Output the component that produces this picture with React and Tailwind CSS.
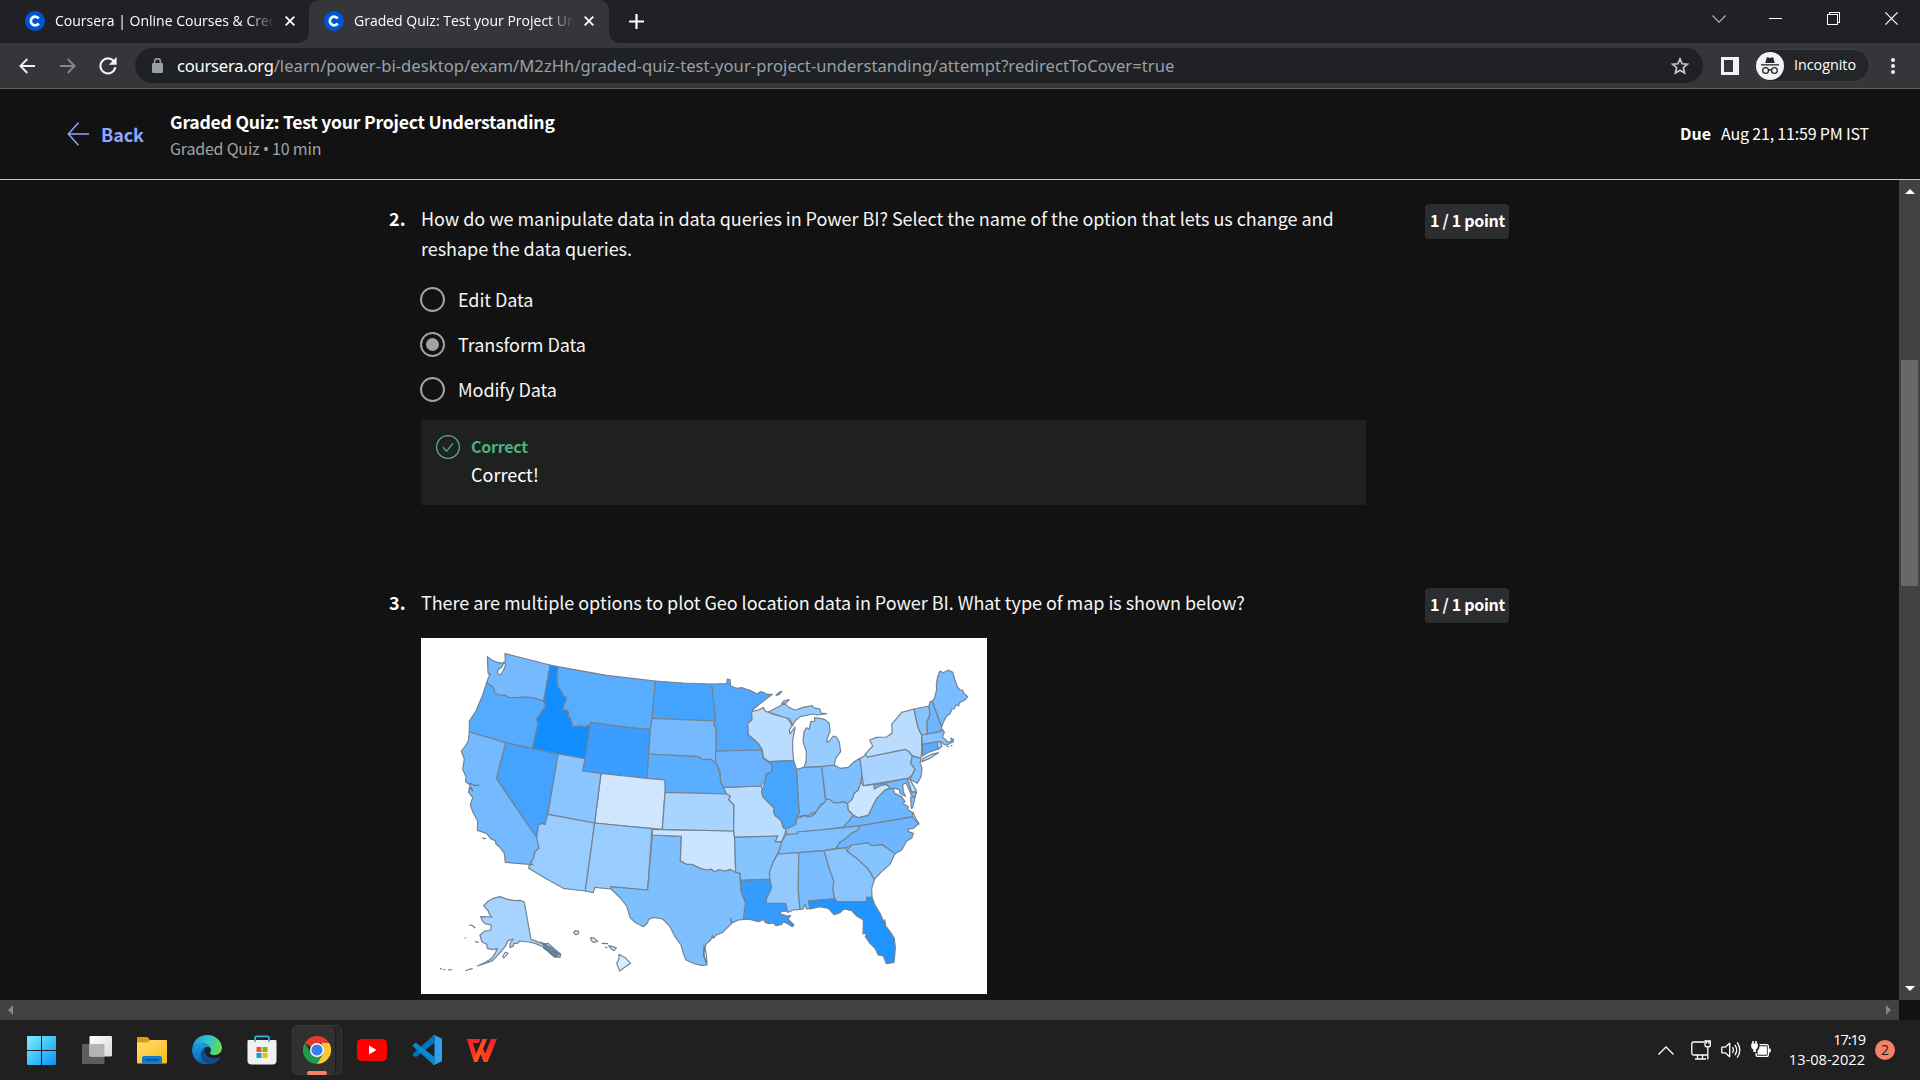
import React from "react";

const STATES = [
  ["#75b9ff", "202,65 215,75 232,82 248,85 256,80 255,56 320,72 390,90 371,198 345,190 320,186 290,188 265,187 255,181 235,180 224,175 222,163 218,155 200,143 205,128 210,119 204,112 203,90"],
  ["#55abff", "200,143 218,155 222,163 224,175 235,180 255,181 265,187 290,188 320,186 345,190 371,198 378,212 350,252 354,268 337,341 257,323 148,291 148,258 168,228 188,180"],
  ["#128dff", "390,90 413,95 411,133 414,154 424,168 431,185 440,187 434,206 428,224 444,227 446,243 452,250 458,275 480,272 495,276 504,270 511,276 495,371 414,357 337,341 354,268 350,252 364,232 378,212 371,198"],
  ["#59adff", "413,95 480,107 560,121 706,138 697,250 691,284 600,275 512,262 511,276 504,270 495,276 480,272 458,275 452,250 446,243 444,227 428,224 434,206 440,187 431,185 424,168 414,154 411,133"],
  ["#3a9dff", "512,262 600,275 691,284 681,430 543,415 488,408 495,371"],
  ["#43a3ff", "706,138 790,144 875,147 880,190 884,225 887,258 696,250"],
  ["#75b9ff", "696,250 887,258 881,268 888,280 889,345 886,382 870,373 850,374 835,365 686,357 691,284"],
  ["#5aaeff", "686,357 835,365 850,374 870,373 886,382 895,400 900,420 903,440 910,457 920,477 735,472 735,435 681,430"],
  ["#d0e6ff", "543,415 681,430 735,435 735,472 727,583 620,574 524,564"],
  ["#8ac5ff", "414,357 495,371 488,408 543,415 524,564 383,538"],
  ["#43a3ff", "257,323 337,341 414,357 383,538 375,569 366,565 356,569 350,607 303,540 229,430"],
  ["#75baff", "148,291 257,323 229,430 303,540 350,607 357,640 345,650 340,672 331,682 337,689 256,682 253,655 240,637 228,628 226,617 212,611 200,595 172,586 173,558 158,530 151,510 158,488 146,472 150,450 137,440 138,425 128,403 133,372 124,348 138,330 145,317"],
  ["#9acdff", "383,538 524,564 496,768 430,760 380,732 326,700 328,690 338,689 332,682 340,672 345,650 357,640 350,607 356,569 366,565 375,569"],
  ["#9acdff", "524,564 696,581 683,765 573,756 573,762 524,757 520,773 496,768"],
  ["#7dbfff", "697,600 784,604 781,677 800,688 817,688 830,695 845,701 860,705 873,702 885,710 895,704 915,708 930,703 961,715 961,737 963,768 977,805 973,825 973,853 955,855 938,863 931,850 935,866 920,880 908,892 890,899 880,910 877,900 872,915 858,927 854,945 850,960 861,990 845,991 825,987 798,975 790,955 783,930 765,905 750,875 728,852 700,847 686,853 682,865 670,875 648,864 630,848 626,832 620,813 600,788 573,762 573,755 683,765"],
  ["#cbe4ff", "696,583 941,588 944,610 947,712 930,703 915,708 895,704 885,710 873,702 860,705 845,701 830,695 817,688 800,688 781,677 784,604 697,600"],
  ["#a9d4ff", "735,472 921,477 931,484 926,494 942,510 941,588 727,583"],
  ["#b9dcff", "910,457 1023,453 1027,460 1025,473 1030,487 1055,512 1063,518 1061,530 1066,542 1083,555 1090,578 1099,582 1094,598 1085,620 1065,621 1073,603 944,607 941,588 942,510 926,494 931,484 920,477"],
  ["#6ab4ff", "887,348 1024,345 1030,362 1028,370 1045,380 1057,392 1055,410 1038,417 1037,432 1023,453 910,457 902,440 900,410 887,382"],
  ["#50a8ff", "875,147 920,146 922,132 930,134 932,153 950,160 965,158 978,162 990,166 1000,171 1010,177 1022,170 1030,172 1040,178 1057,178 1030,198 1000,223 994,232 996,255 983,265 984,300 1000,312 1015,325 1024,333 1024,345 888,348 889,280 881,268 887,258 884,225 880,190"],
  ["#b9dcff", "995,230 1015,225 1030,218 1037,230 1045,231 1060,238 1080,243 1100,248 1110,260 1116,272 1108,285 1110,297 1125,276 1122,295 1118,315 1118,345 1121,377 1047,380 1030,367 1027,345 1015,325 1000,312 985,300 983,265 996,255"],
  ["#47a5ff", "1047,380 1121,377 1130,403 1136,505 1138,535 1130,550 1128,568 1108,578 1099,582 1090,578 1083,555 1066,542 1061,530 1063,518 1055,512 1030,487 1025,473 1037,432 1038,417 1055,410 1057,392"],
  ["#79bcff", "1130,403 1152,397 1205,394 1217,500 1200,510 1195,520 1190,530 1175,535 1165,543 1150,541 1140,547 1130,547 1138,535 1136,505"],
  ["#7dbfff", "1205,394 1242,390 1260,400 1285,397 1300,382 1320,370 1327,410 1323,440 1315,465 1303,475 1297,492 1283,507 1273,500 1260,503 1240,503 1230,494 1217,492"],
  ["#97ccff", "1152,397 1205,394 1243,390 1247,370 1262,350 1258,322 1250,307 1240,303 1228,318 1220,322 1222,308 1230,290 1228,265 1215,254 1200,250 1183,248 1185,258 1172,260 1168,283 1160,278 1152,290 1149,320 1159,350 1158,380"],
  ["#97ccff", "1045,231 1080,213 1093,205 1108,218 1125,225 1150,217 1177,212 1180,218 1200,222 1202,234 1220,236 1190,240 1180,237 1165,240 1140,245 1125,258 1118,272 1110,252 1080,243"],
  ["#50a8ff", "1068,181 1076,173 1086,169 1078,178"],
  ["#97ccff", "1085,207 1090,198 1107,194 1098,204"],
  ["#86c4ff", "1130,550 1150,541 1165,543 1175,535 1190,530 1195,520 1217,500 1217,492 1230,494 1240,503 1260,503 1273,500 1283,507 1285,525 1300,542 1285,560 1270,576 1200,585 1133,591 1132,597 1099,598 1097,582 1108,578 1128,568"],
  ["#80c0ff", "1098,598 1132,597 1133,591 1200,585 1270,578 1320,572 1315,585 1295,595 1275,612 1260,622 1248,640 1212,647 1136,653 1074,657 1085,620"],
  ["#86c4ff", "944,607 1073,603 1065,621 1085,620 1078,645 1060,680 1050,712 1051,732 961,737 961,715 947,712"],
  ["#359bff", "961,736 1051,733 1055,758 1040,790 1038,805 1097,805 1103,828 1082,830 1082,837 1102,843 1112,842 1104,852 1122,870 1117,875 1103,866 1090,860 1085,868 1068,872 1060,864 1045,866 1033,860 1033,853 1015,860 990,853 970,853 977,805 963,768"],
  ["#92caff", "1074,657 1136,653 1135,770 1140,823 1120,825 1103,832 1097,805 1038,805 1040,790 1055,758 1050,732 1048,712 1060,680"],
  ["#79bcff", "1136,653 1212,647 1228,700 1242,740 1238,760 1244,792 1165,798 1170,820 1160,822 1155,808 1150,822 1140,823 1135,770"],
  ["#8ac5ff", "1212,647 1280,638 1282,648 1310,670 1340,697 1352,713 1363,735 1355,760 1356,787 1340,787 1340,800 1250,800 1244,790 1238,760 1242,740 1228,700"],
  ["#2094ff", "1165,798 1243,791 1250,800 1340,800 1340,787 1356,787 1365,810 1380,835 1395,870 1410,890 1423,910 1426,940 1422,982 1399,986 1390,963 1375,960 1365,940 1350,925 1336,905 1340,893 1329,897 1330,855 1310,843 1295,827 1272,822 1260,833 1242,839 1225,820 1200,815 1170,822"],
  ["#86c4ff", "1280,647 1295,630 1345,623 1355,632 1388,629 1425,656 1410,688 1385,710 1363,733 1352,713 1340,697 1310,670"],
  ["#6eb6ff", "1248,640 1260,622 1275,612 1295,595 1315,585 1320,572 1478,545 1495,567 1480,580 1462,583 1466,590 1480,595 1475,610 1460,618 1445,645 1425,656 1388,629 1355,632 1345,623 1295,630 1280,638"],
  ["#6eb6ff", "1268,578 1285,560 1300,542 1315,548 1345,542 1355,520 1370,490 1382,478 1395,465 1412,460 1420,462 1424,475 1445,485 1455,500 1448,505 1465,515 1462,523 1478,533 1478,545 1320,572"],
  ["#cbe4ff", "1323,440 1330,452 1363,448 1363,462 1380,450 1395,446 1412,458 1395,465 1382,478 1370,490 1355,520 1345,540 1315,548 1300,540 1285,525 1283,505 1297,492 1303,475 1315,465"],
  ["#a9d4ff", "1320,370 1340,359 1343,366 1455,343 1465,348 1477,363 1472,385 1485,402 1478,418 1465,430 1330,452 1325,410"],
  ["#b9dcff", "1335,358 1358,333 1349,315 1370,307 1400,306 1417,293 1415,268 1430,250 1445,232 1482,222 1488,250 1495,280 1505,300 1505,350 1503,370 1477,362 1465,348 1455,343 1343,366"],
  ["#b9dcff", "1505,380 1510,370 1535,358 1555,353 1530,370"],
  ["#86c4ff", "1477,363 1503,370 1500,383 1506,400 1503,425 1492,445 1483,440 1470,432 1478,418 1485,402 1472,385"],
  ["#75b9ff", "1363,462 1363,450 1400,443 1462,430 1475,471 1490,472 1485,486 1474,482 1468,465 1458,444 1448,448 1450,470 1456,484 1440,475 1438,464 1424,460 1412,460 1400,448 1380,452"],
  ["#b9dcff", "1462,430 1470,433 1478,448 1490,468 1475,471"],
  ["#86c4ff", "1472,486 1485,487 1478,518 1474,520"],
  ["#86c4ff", "1482,222 1527,213 1530,238 1521,262 1522,298 1505,300 1495,280 1488,250"],
  ["#6eb6ff", "1527,213 1530,200 1537,198 1552,240 1565,275 1562,288 1522,298 1521,262 1530,238"],
  ["#79bcff", "1537,198 1543,190 1547,175 1550,165 1549,148 1553,125 1560,108 1570,113 1585,105 1598,112 1605,135 1612,156 1620,165 1628,165 1630,173 1643,185 1635,195 1618,203 1616,213 1608,210 1602,222 1596,222 1590,236 1580,243 1570,262 1565,275 1552,240"],
  ["#86c4ff", "1505,300 1562,290 1567,283 1573,292 1567,305 1583,321 1596,318 1592,309 1600,313 1600,320 1580,330 1572,328 1562,320 1507,328"],
  ["#59adff", "1507,328 1552,320 1556,341 1525,352 1508,363"],
  ["#a9d4ff", "1551,321 1561,320 1566,334 1555,343"],
  ["#a6d3ff", "182,845 216,846 208,838 205,828 191,812 205,798 220,790 240,785 262,793 285,797 300,796 313,801 323,858 333,914 345,917 370,928 385,925 403,942 422,957 420,967 402,964 385,950 370,936 345,925 325,921 300,918 292,925 282,925 280,933 270,938 270,925 280,912 264,917 255,935 244,948 232,962 218,977 195,985 172,993 195,983 215,970 225,956 232,940 218,944 202,940 200,928 185,920 180,900 195,888 212,885 214,870 195,866 188,859"],
  ["#dcecff", "597,958 615,968 632,985 615,996 599,1008 590,985 597,972"],
  ["#dcecff", "461,893 466,887 476,889 475,897 467,899"],
  ["#dcecff", "512,908 522,909 533,919 520,922 514,917"],
  ["#dcecff", "566,932 576,935 589,938 582,947 572,940"],
];

const COAST_LINES = [
  "148,445 158,448 165,452 178,450",
  "146,462 155,460 158,468 152,455",
  "187,608 191,611 198,610",
  "545,925 564,926", "555,935 562,939",
  "148,870 158,872 166,879",
  "60,1000 66,1003", "70,1005 76,1003", "84,1005 95,1004",
  "134,908 138,910", "165,920 176,922",
  "136,1007 148,1003 158,1001",
  "247,967 256,952 264,955 255,966 249,969",
  "362,920 378,932 395,940 402,950 420,958",
  "370,940 385,948 398,962 408,968",
  "375,925 370,935 385,945 395,955 412,963",
  "852,930 851,950 854,970 861,985 858,952 853,935",
  "1394,853 1397,870 1388,855",
  "1580,332 1586,336", "1592,334 1597,331",
  "1478,530 1488,552 1498,568",
  "1140,547 1156,541 1163,547 1175,543 1188,534",
];

function UsMap() {
  return (
    <svg viewBox="3 9 1698 1068" className="block h-[356px] w-[566px] bg-white">
      <g stroke="#738391" strokeWidth="3.6" strokeLinejoin="round">
        {STATES.map(([fill, points], i) => (
          <polygon key={i} fill={fill} points={points} />
        ))}
        <path d="M250 86 245 97 234 105 233 116 241 120 249 108 257 90 252 80Z" fill="#fff" />
        <path d="M203 117h8" />
      </g>
      <g fill="none" stroke="#66788a" strokeWidth="3.4" strokeLinejoin="round">
        {COAST_LINES.map((points, i) => (
          <polyline key={i} points={points} />
        ))}
      </g>
      <path d="M370 922 400 942 420 957 412 967 390 953 370 936Z" fill="#5f7385" opacity=".75" />
    </svg>
  );
}

function CourseraIcon() {
  return (
    <svg viewBox="0 0 20 20" className="size-5 shrink-0">
      <circle cx="10" cy="10" r="10" fill="#0056d2" />
      <path d="M13.7 7.6A4.3 4.3 0 1 0 13.7 12.4" fill="none" stroke="#fff" strokeWidth="2.7" />
    </svg>
  );
}

function TabClose() {
  return (
    <svg viewBox="0 0 10 10" className="size-[10px] shrink-0" stroke="#fff" strokeWidth="1.8">
      <path d="M.7.7 9.3 9.3M9.3.7.7 9.3" />
    </svg>
  );
}

function TabStrip() {
  return (
    <div className="flex h-[43px] items-stretch bg-[#202124] text-white">
      <div className="flex w-[309px] items-center pb-px pl-[25px]">
        <CourseraIcon />
        <span className="ml-[10px] w-[220px] overflow-hidden whitespace-nowrap pb-px text-[14px] [mask-image:linear-gradient(to_right,black_87%,transparent)]">
          Coursera | Online Courses &amp; Credentials
        </span>
        <span className="ml-[10px]"><TabClose /></span>
      </div>
      <div className="relative flex w-[300px] items-center rounded-t-[10px] bg-[#35363a] pb-px pl-[15px]">
        <span className="absolute -left-[10px] bottom-0 size-[10px] bg-[radial-gradient(circle_at_0_0,transparent_9.5px,#35363a_10px)]" />
        <span className="absolute -right-[10px] bottom-0 size-[10px] bg-[radial-gradient(circle_at_100%_0,transparent_9.5px,#35363a_10px)]" />
        <CourseraIcon />
        <span className="ml-[10px] w-[220px] overflow-hidden whitespace-nowrap pb-px text-[14px] [mask-image:linear-gradient(to_right,black_88%,transparent)]">
          Graded Quiz: Test your Project Understanding
        </span>
        <span className="ml-[10px]"><TabClose /></span>
      </div>
      <div className="flex w-[54px] items-center justify-center pb-px">
        <svg viewBox="0 0 15 15" className="size-[15px]" stroke="#fff" strokeWidth="2.2"><path d="M7.5 0v15M0 7.5h15" /></svg>
      </div>
      <div className="ml-auto flex h-[37px] items-center">
        <div className="flex w-[57px] justify-center">
          <svg viewBox="0 0 14 8" className="h-2 w-[14px]" fill="none" stroke="#b4b5b7" strokeWidth="1.1"><path d="M.5.5 7 7.2 13.5.5" /></svg>
        </div>
        <div className="flex w-[57px] justify-center"><span className="h-px w-[13px] bg-white" /></div>
        <div className="flex w-[58px] justify-center">
          <svg viewBox="0 0 13 13" className="size-[13px]" fill="none" stroke="#fff" shapeRendering="crispEdges"><path d="M.5 2.5h10v10H.5zM2.5 2V.5h10v10H11" /></svg>
        </div>
        <div className="flex w-[58px] justify-center">
          <svg viewBox="0 0 13 13" className="size-[13px]" stroke="#fff" strokeWidth="1.2"><path d="M.4.4 12.6 12.6M12.6.4.4 12.6" /></svg>
        </div>
      </div>
    </div>
  );
}

function Toolbar() {
  return (
    <div className="flex h-[46px] items-center border-b border-[#5e6063] bg-[#35363a] pl-[19px]">
      <svg viewBox="0 0 16 16" className="size-4" fill="none" stroke="#f1f3f4" strokeWidth="1.8"><path d="M16 8H1.5M8.3 1 1.4 8l6.9 7" /></svg>
      <svg viewBox="0 0 16 16" className="ml-[25px] size-4" fill="none" stroke="#85878a" strokeWidth="1.8"><path d="M0 8h14.5M7.7 1l6.9 7-6.900 7" /></svg>
      <svg viewBox="0 0 18 18" className="ml-[23px] size-[18px]" fill="none"><path d="M15.2 4.8A7.5 7.5 0 1 0 16.3 10.3" stroke="#f1f3f4" strokeWidth="2.1" /><path d="M17.6 0v7.800H9.8z" fill="#f1f3f4" /></svg>
      <div className="ml-[18px] flex h-[35px] w-[1568px] items-center rounded-full bg-[#202124] pl-[17px] pr-[14px]">
        <svg viewBox="0 0 11 15" className="h-[15px] w-[11px]"><rect y="5" width="11" height="10" rx="1.3" fill="#9aa0a6" /><path d="M2.6 6V3.6a2.9 2.9 0 0 1 5.8 0V6" fill="none" stroke="#9aa0a6" strokeWidth="1.5" /></svg>
        <span className="ml-[14px] whitespace-nowrap font-['Noto_Sans'] text-[16.6px] leading-[34px] tracking-[0.045px] text-[#9aa0a6]">
          <span className="tracking-[-0.25px] text-white">coursera.org</span>/learn/power-bi-desktop/exam/M2zHh/graded-quiz-test-your-project-understanding/attempt?redirectToCover=true
        </span>
        <svg viewBox="0 0 18 18" className="ml-auto size-[18px]" fill="none" stroke="#c4c6c9" strokeWidth="1.7"><path d="m9 1.900 2.050 4.900 5.300.45-4.020 3.480 1.220 5.170L9 13.150 4.450 15.900l1.220-5.170L1.650 7.250l5.300-.45z" /></svg>
      </div>
      <svg viewBox="0 0 18 18" className="ml-[18px] size-[18px]"><path fillRule="evenodd" d="M0 0h18v18H0zM3 3v12h9V3z" fill="#f1f3f4" /></svg>
      <div className="ml-[15px] flex h-[33px] w-[116px] items-center rounded-full border border-[#3f4144] bg-[#242528] pl-[1px]">
        <svg viewBox="0 0 28 28" className="size-7">
          <circle cx="14" cy="14" r="14" fill="#f1f3f4" />
          <path d="m9.3 11 1.400-5.300q.2-.6.8-.4L14 6l2.500-.7q.6-.2.8.4L18.700 11z" fill="#242528" />
          <path d="M5 12.200h18v1.300H5z" fill="#242528" />
          <g fill="none" stroke="#242528" strokeWidth="1.3"><circle cx="9.6" cy="18.5" r="2.9" /><circle cx="18.4" cy="18.5" r="2.9" /><path d="M12.500 18.200q1.500-.9 3 0" /></g>
        </svg>
        <span className="ml-[10px] pb-px text-[14.3px] text-white">Incognito</span>
      </div>
      <svg viewBox="0 0 4 16" className="ml-[21px] h-4 w-1" fill="#f1f3f4"><circle cx="2" cy="2" r="2" /><circle cx="2" cy="8" r="2" /><circle cx="2" cy="14" r="2" /></svg>
    </div>
  );
}

function QuizHeader() {
  return (
    <header className="flex h-[91px] items-center border-b border-[#c1c1c1] pl-[67px] pr-[51px]">
      <svg viewBox="0 0 22 24" className="h-6 w-[22px]" fill="none" stroke="#8ea6ff" strokeWidth="1.5"><path d="M22 12H1.500M11.500.8 1.300 12l10.200 11.200" /></svg>
      <span className="ml-[12px] w-[69px] text-[18px] font-bold tracking-[-0.1px] text-[#8ea6ff]">Back</span>
      <div className="flex flex-col pt-px">
        <span className="text-[17.6px] font-bold leading-[27px] tracking-[-0.22px] text-white">Graded Quiz: Test your Project Understanding</span>
        <span className="text-[16px] leading-[26px] tracking-[-0.2px] text-[#a2a2a2]">
          Graded Quiz <span className="font-['Noto_Sans']">•</span> 10 min
        </span>
      </div>
      <div className="ml-auto flex gap-[10px] pb-0.5 text-[16px] text-white">
        <span className="font-bold">Due</span>
        <span className="tracking-[-0.17px]">Aug 21, 11:59 PM IST</span>
      </div>
    </header>
  );
}

function Question({ number, text, children }) {
  return (
    <section className="flex items-start">
      <span className="w-[32px] text-[18px] font-bold leading-[30px] text-white">{number}.</span>
      <div className="w-[945px]">
        <p className="w-[925px] text-[18px] leading-[30px] tracking-[-0.045px] text-[#f5f5f5]">{text}</p>
        {children}
      </div>
      <span className="ml-[59px] mt-px flex h-[35px] w-[84px] items-center justify-center whitespace-nowrap rounded bg-[#2c2d2f] pb-[3px] pl-px text-[16px] font-bold tracking-[-0.3px] text-white">
        1 / 1 point
      </span>
    </section>
  );
}

function Option({ label, checked }) {
  return (
    <label className="flex h-[45px] items-center">
      <span className="-ml-px flex size-[25px] items-center justify-center rounded-full border-[2.5px] border-[#a2a2a2]">
        {checked && <span className="size-[13px] rounded-full bg-[#a2a2a2]" />}
      </span>
      <span className="ml-[13px] pb-px text-[18px] tracking-[-0.07px] text-[#f5f5f5]">{label}</span>
    </label>
  );
}

function Quiz() {
  return (
    <main className="min-w-0 flex-1 overflow-hidden pl-[389px] pt-[23px]">
      <div className="h-[384px]">
        <Question number={2} text="How do we manipulate data in data queries in Power BI? Select the name of the option that lets us change and reshape the data queries.">
          <div className="mt-[14px]">
            <Option label="Edit Data" />
            <Option label="Transform Data" checked />
            <Option label="Modify Data" />
          </div>
          <div className="mt-[8px] flex h-[85px] bg-[#1f2120] pl-[14px] pt-[13px]">
            <svg viewBox="0 0 26 26" className="mt-px size-[26px]" fill="none" stroke="#4db27d" strokeWidth="1.3"><circle cx="13" cy="13" r="11.4" /><path d="m8 13.300 3.500 4 6.300-7.800" /></svg>
            <div className="ml-[10px] flex flex-col">
              <span className="text-[16px] font-bold leading-[27px] tracking-[-0.25px] text-[#4db27d]">Correct</span>
              <span className="text-[18px] leading-[29px] text-white">Correct!</span>
            </div>
          </div>
        </Question>
      </div>
      <Question number={3} text="There are multiple options to plot Geo location data in Power BI. What type of map is shown below?">
        <div className="mt-[21px]"><UsMap /></div>
      </Question>
    </main>
  );
}

function VerticalScrollbar() {
  return (
    <div className="flex w-[21px] flex-col items-center bg-[#424242]">
      <svg viewBox="0 0 10 5" className="mt-[9px] h-[5px] w-[10px]" fill="#fff"><path d="M0 5 5 0l5 5z" /></svg>
      <div className="mt-[166px] h-[226px] w-[17px] bg-[#686868]" />
      <svg viewBox="0 0 10 5" className="mb-[9px] mt-auto h-[5px] w-[10px]" fill="#fff"><path d="m0 0 5 5 5-5z" /></svg>
    </div>
  );
}

function HorizontalScrollbar() {
  return (
    <div className="flex h-5">
      <div className="flex w-[1899px] items-center justify-between bg-[#424242] px-2">
        <svg viewBox="0 0 5 10" className="h-[10px] w-[5px]" fill="#868686"><path d="M5 0 0 5l5 5z" /></svg>
        <svg viewBox="0 0 5 10" className="h-[10px] w-[5px]" fill="#868686"><path d="m0 0 5 5-5 5z" /></svg>
      </div>
    </div>
  );
}

function WindowsIcon() {
  return (
    <svg viewBox="0 0 29 29" className="-ml-px size-[29px]">
      <defs><linearGradient id="win" x1="0" y1="0" x2="29" y2="29" gradientUnits="userSpaceOnUse"><stop stopColor="#7df0ff" /><stop offset="1" stopColor="#0a93f5" /></linearGradient></defs>
      <path d="M1 0h13v14H0V1q0-1 1-1zM15 0h13q1 0 1 1v13H15zM0 15h14v14H1q-1 0-1-1zM15 15h14v13q0 1-1 1H15z" fill="url(#win)" />
    </svg>
  );
}

function TaskViewIcon() {
  return (
    <svg viewBox="0 0 30 30" className="size-[30px]">
      <defs><linearGradient id="tv" x1="0" y1="0" x2="1" y2="1"><stop stopColor="#fff" /><stop offset="1" stopColor="#d9d9d9" /></linearGradient></defs>
      <rect y="9" width="22.5" height="20" rx="1.3" fill="#5d5d5d" />
      <rect x="7.5" y="1" width="22.5" height="20.5" rx="1.3" fill="url(#tv)" />
      <path d="M7.500 9h15v12.500h-14q-1 0-1-1z" fill="#b5b5b5" />
    </svg>
  );
}

function ExplorerIcon() {
  return (
    <svg viewBox="0 0 30 30" className="size-[30px]">
      <defs><linearGradient id="fold" x1="0" y1="0" x2="1" y2="1"><stop stopColor="#ffdf75" /><stop offset="1" stopColor="#fcb919" /></linearGradient></defs>
      <path d="M0 3q0-1 1-1h8.500q1 0 1.600.7L13 5H29v5H0z" fill="#dc9d0b" />
      <path d="M0 7.500h10.500L13 5h16q1 0 1 1v21.500q0 1-1 1H1q-1 0-1-1z" fill="url(#fold)" />
      <path d="M5 28.500V23q0-2 2-2h16q2 0 2 2v5.500z" fill="#0f7bd0" />
      <path d="M8.500 24h13v1.600h-13z" fill="#0b4f8f" />
    </svg>
  );
}

function EdgeIcon() {
  return (
    <svg viewBox="0 0 30 30" className="size-[30px]">
      <defs>
        <linearGradient id="e1" x1="0" y1="0.3" x2="1" y2="0.5"><stop stopColor="#1b9de8" /><stop offset=".5" stopColor="#30c4ce" /><stop offset="1" stopColor="#62e04d" /></linearGradient>
        <linearGradient id="e2" x1="0" y1="0" x2="0" y2="1"><stop stopColor="#1ba0e2" /><stop offset="1" stopColor="#0a5fb8" /></linearGradient>
      </defs>
      <path d="M.3 13C1.500 5 7.500 0 15 0c9 0 15 6.500 15 12.800 0 4.700-3.600 7.200-7.300 7.200-4 0-5.300-1.500-4.600-2.600 1-1.300 1.200-3.300 0-5.200C16 8.800 12 7.500 8.500 8 4.700 8.600 1.800 10.300.3 13z" fill="url(#e1)" />
      <path d="M.3 13C2 10 5.500 8 9.500 8c4.500 0 8 2.200 9 5.200-1.500-1.700-4-2-5.500-.8-3.700 2.900-3 9 2 12.600 2 1.500 4.500 2.400 6.500 2.300C13 32.500 0 27.500 0 15z" fill="url(#e2)" />
      <path d="M13 12.400c-5 3.100-5.700 10.100-1.500 14.100 3.600 3.400 9 3.600 12.500 1 2-1.500 3.700-3.300 4.500-5 .2-.6-.2-.8-.7-.6-6.500 3-13 .5-14.500-3.900-.7-2-.6-4.100-.3-5.600z" fill="#114a8b" />
    </svg>
  );
}

function StoreIcon() {
  return (
    <svg viewBox="0 0 30 30" className="-ml-px size-[30px]">
      <path d="M8 8V3q0-1.600 1.600-1.600h10.800Q22 1.400 22 3v5" fill="none" stroke="#2fb4ee" strokeWidth="1.7" />
      <path d="M.5 6q0-1 1-1h27q1 0 1 1v19.500q0 4-4 4h-21q-4 0-4-4z" fill="#f1f1f1" />
      <path d="M8 5v2M22 5v2" stroke="#2fb4ee" strokeWidth="1.7" />
      <path d="M9.500 12h5v5h-5z" fill="#f25022" /><path d="M15.500 12h5v5h-5z" fill="#7fba00" />
      <path d="M9.500 18h5v5h-5z" fill="#00a4ef" /><path d="M15.500 18h5v5h-5z" fill="#ffb900" />
    </svg>
  );
}

function ChromeIcon() {
  return (
    <svg viewBox="0 0 48 48" className="size-[28px]">
      <path d="M24 24 3.200 12A24 24 0 0 1 44.800 12H24z" fill="#e33b2e" />
      <path d="M44.800 12A24 24 0 0 1 24 48l10.400-18L34.400 18 31 12z" fill="#fcc934" />
      <path d="M3.200 12A24 24 0 0 0 24 48l10.400-18-20.800 0z" fill="#229c4c" />
      <circle cx="24" cy="24" r="12" fill="#fff" /><circle cx="24" cy="24" r="9.5" fill="#3b7ded" />
    </svg>
  );
}

function YoutubeIcon() {
  return (
    <svg viewBox="0 0 30 22" className="h-[22px] w-[30px]">
      <rect width="30" height="22" rx="4.5" fill="#f00" /><path d="m12 6.500 7.500 4.500-7.500 4.500z" fill="#fff" />
    </svg>
  );
}

function VsCodeIcon() {
  return (
    <svg viewBox="0 0 30 30" className="size-[30px]">
      <path d="m.6 19.800 2.100 2q.8.6 1.500.1L22.500 8V0q-.7 0-1.200.5L.6 19q-.4.4 0 .8z" fill="#0073b7" />
      <path d="m.6 10.200 2.100-2q.8-.6 1.500-.1L22.500 22v8q-.7 0-1.200-.5L.6 11q-.4-.4 0-.8z" fill="#0588d1" />
      <path d="M22 0l7 3.200q1 .5 1 1.600v20.400q0 1.100-1 1.600L22 30q-.8 0-1-.5 1.500.5 1.500-1V1.500q0-1.500-1.500-1 .2-.5 1-.5z" fill="#2ba2ee" />
    </svg>
  );
}

function WpsIcon() {
  return (
    <svg viewBox="0 0 30 23" className="h-[23px] w-[30px]">
      <defs><linearGradient id="wps" x1="0" y1="0" x2="0" y2="1"><stop stopColor="#fb1b2d" /><stop offset="1" stopColor="#ff4a15" /></linearGradient></defs>
      <path d="M0 0h13.500l-1.800 4H6l3 10.500L15.500 0H20l-4 9.500 2.300 5L24 0h6l-9.500 23h-3.800L13.500 15l-3.200 8H7z" fill="url(#wps)" />
      <path d="M15.500 0H20L10.300 23H7z" fill="#ff5a1c" opacity=".7" />
    </svg>
  );
}

function TaskCell({ children }) {
  return <div className="flex h-[50px] w-[50px] items-center justify-center">{children}</div>;
}

function Taskbar() {
  return (
    <footer className="flex h-[60px] items-center bg-[#202020] pl-[17px] pr-[25px] text-white">
      <div className="flex gap-[5px]">
        <TaskCell><WindowsIcon /></TaskCell>
        <TaskCell><TaskViewIcon /></TaskCell>
        <TaskCell><ExplorerIcon /></TaskCell>
        <TaskCell><EdgeIcon /></TaskCell>
        <TaskCell><StoreIcon /></TaskCell>
        <div className="relative flex h-[50px] w-[50px] rounded-[5px] border border-[#383838] bg-[#292929]">
          <div className="flex h-[48px] w-[43px] items-center justify-center rounded-[5px] border-r border-[#1c1c1c] bg-[#303030] pl-[5px]"><ChromeIcon /></div>
          <span className="absolute -bottom-px left-[14px] h-1 w-5 rounded-full bg-[#f78166]" />
        </div>
        <TaskCell><YoutubeIcon /></TaskCell>
        <TaskCell><VsCodeIcon /></TaskCell>
        <TaskCell><WpsIcon /></TaskCell>
      </div>
      <div className="ml-auto flex items-center">
        <svg viewBox="0 0 16 9" className="h-[9px] w-4" fill="none" stroke="#fff" strokeWidth="1.3"><path d="M.5 8.500 8 1l7.500 7.500" /></svg>
        <svg viewBox="0 0 20 20" className="ml-[17px] size-5" fill="none" stroke="#fff" strokeWidth="1.3"><path d="M13 2H2.500Q.8 2 .8 3.700v9.600q0 1.700 1.700 1.700h13.700M6.500 15v4M11.500 15v4M4 19h11" /><path d="M14 1h5.300v4q0 2-2.650 2T14 5zM15.500.5v3M17.800.5v3M16.800 7v12.500" /></svg>
        <svg viewBox="0 0 20 20" className="ml-[10px] size-5" fill="none" stroke="#fff" strokeWidth="1.3" strokeLinejoin="round"><path d="M.8 7.200h3.400l4.500-4v13.600l-4.500-4H.8zM11.500 7.200q1.800 2.800 0 5.600M13.900 4.800q3.600 5.200 0 10.400M16.200 2.400q5.200 7.600 0 15.200" /></svg>
        <svg viewBox="0 0 20 18" className="ml-[10px] h-[18px] w-5">
          <path d="M2 0v3M5 0v3" stroke="#fff" strokeWidth="1.6" />
          <path d="M.2 2.500h6.600v3.200q0 2-1.900 2.500V11H2.300V8.200Q.2 7.700.2 5.700z" fill="#fff" />
          <path d="M8.500 3.700h7q1.900 0 1.900 1.900v7.800q0 1.900-1.900 1.900H7q-1.900 0-1.900-1.900V12" fill="none" stroke="#fff" strokeWidth="1.3" />
          <path d="M8.400 5.200h7.500v8.600H6.600V9.300q1.800-1 1.800-3.300z" fill="#fff" />
          <path d="M17.800 7.300q2.200 0 2.200 2.200t-2.200 2.200z" fill="#fff" />
        </svg>
        <div className="ml-[18px] mr-px flex w-[76px] flex-col items-end pb-0.5 text-[14.6px] leading-5">
          <span className="tracking-[-1.1px]">17:19</span>
          <span className="whitespace-nowrap">13-08-2022</span>
        </div>
        <span className="ml-[9px] flex size-5 items-center justify-center rounded-full bg-[#f78166] text-[14px] leading-none text-[#2a1a16]">2</span>
      </div>
    </footer>
  );
}

export default function App() {
  return (
    <div className="flex h-[1080px] w-[1920px] flex-col overflow-hidden bg-[#121212] font-['Open_Sans',sans-serif]">
      <TabStrip />
      <Toolbar />
      <div className="font-['Noto_Sans_CJK_SC',sans-serif]"><QuizHeader /></div>
      <div className="flex h-[820px] font-['Noto_Sans_CJK_SC',sans-serif]">
        <Quiz />
        <VerticalScrollbar />
      </div>
      <HorizontalScrollbar />
      <Taskbar />
    </div>
  );
}
